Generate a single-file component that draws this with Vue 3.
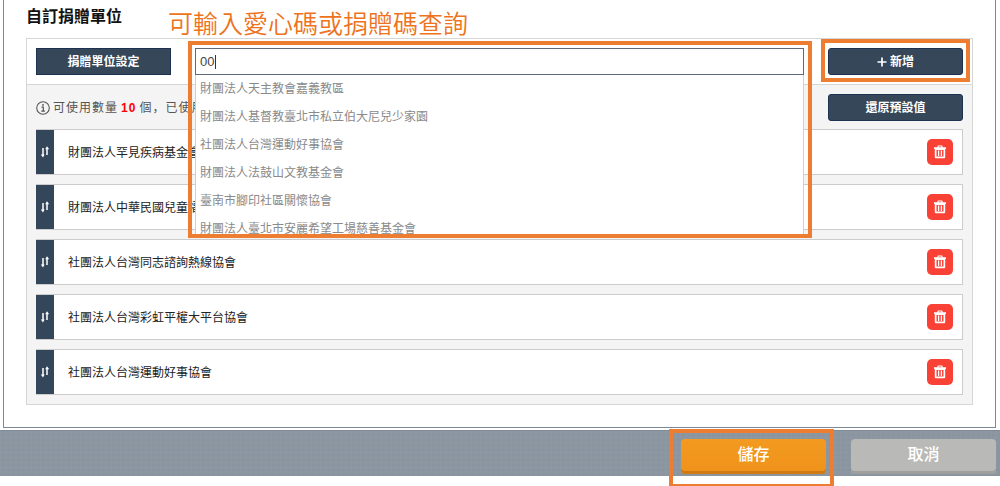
<script setup>
import { ref } from 'vue'

const keyword = ref('00')

const suggestions = [
  '財團法人天主教會嘉義教區',
  '財團法人基督教臺北市私立伯大尼兒少家園',
  '社團法人台灣運動好事協會',
  '財團法人法鼓山文教基金會',
  '臺南市腳印社區關懷協會',
  '財團法人臺北市安麗希望工場慈善基金會',
]

const units = ref([
  '財團法人罕見疾病基金會',
  '財團法人中華民國兒童福',
  '社團法人台灣同志諮詢熱線協會',
  '社團法人台灣彩虹平權大平台協會',
  '社團法人台灣運動好事協會',
])

function removeUnit(index) {
  units.value.splice(index, 1)
}
</script>

<template>
  <div class="page">
    <main class="frame">
      <div class="heading">
        <h1>自訂捐贈單位</h1>
        <p class="note">可輸入愛心碼或捐贈碼查詢</p>
      </div>

      <section class="panel">
        <div class="panel-head">
          <label class="tag" for="unit-search">捐贈單位設定</label>
          <div class="combo">
            <input id="unit-search" v-model="keyword" type="text" autocomplete="off" />
            <span class="caret"></span>
            <ul class="menu">
              <li v-for="name in suggestions" :key="name">{{ name }}</li>
            </ul>
            <span class="mark mark-search"></span>
          </div>
          <div class="marked">
            <button class="btn" type="button">
              <svg width="10" height="10" viewBox="0 0 10 10" aria-hidden="true">
                <path d="M5 0.5v9M0.5 5h9" stroke="#fff" stroke-width="1.7" />
              </svg>
              新增
            </button>
            <span class="mark mark-add"></span>
          </div>
        </div>

        <div class="panel-body">
          <div class="info">
            <p>
              <svg width="14" height="14" viewBox="0 0 14 14" aria-hidden="true">
                <circle cx="7" cy="7" r="6.3" fill="none" stroke="#555" stroke-width="1.1" />
                <circle cx="7" cy="3.9" r="0.9" fill="#555" />
                <path d="M5.5 6.2H7.3V10M5.3 10.2H8.9" fill="none" stroke="#555" stroke-width="1.2" />
              </svg>
              <span>可使用數量<b>10</b>個，已使用</span>
            </p>
            <button class="btn" type="button">還原預設值</button>
          </div>

          <ul class="units">
            <li v-for="(name, i) in units" :key="name">
              <button class="handle" type="button" aria-label="排序">
                <svg width="10" height="12" viewBox="0 0 10 12" aria-hidden="true">
                  <path d="M3 2V9.5M7 9V2.5" fill="none" stroke="#fff" stroke-width="1.5" />
                  <path d="M0.8 8.5H4.6L3 11.6ZM5.2 3.2H9.2L7 0.2Z" fill="#fff" />
                </svg>
              </button>
              <span class="name">{{ name }}</span>
              <button class="remove" type="button" aria-label="刪除" @click="removeUnit(i)">
                <svg width="14" height="14" viewBox="0 0 14 14" aria-hidden="true">
                  <path
                    fill="#fff"
                    fill-rule="evenodd"
                    d="M4.8 0.5H9.2L9.8 2.2H13V4H12.2V12.3Q12.2 13.3 11.2 13.3H2.8Q1.8 13.3 1.8 12.3V4H1V2.2H4.2ZM3.5 5V11.6H10.5V5ZM5.7 1.6L5.5 2.2H8.5L8.3 1.6Z"
                  />
                  <path d="M5.6 5.6V11M8.4 5.6V11" stroke="#fff" stroke-width="1.3" />
                </svg>
              </button>
            </li>
          </ul>
        </div>
      </section>
    </main>

    <footer class="bar">
      <div class="marked">
        <button class="action save" type="button">儲存</button>
        <span class="mark mark-save"></span>
      </div>
      <button class="action cancel" type="button">取消</button>
    </footer>
  </div>
</template>

<style>
body {
  background: #fff;
}
</style>

<style scoped>
.page,
.page button,
.page input {
  font-family: "Liberation Sans", "Noto Sans CJK TC", sans-serif;
}
.page * {
  box-sizing: border-box;
}
.page {
  padding-bottom: 10px;
  overflow: hidden;
}
h1,
p,
ul {
  margin: 0;
  padding: 0;
  list-style: none;
}
.frame {
  margin: 0 4px 2px 3px;
  padding: 0 22px 22px;
  border: 1px solid #7d8795;
  border-top: 0;
}
.heading {
  display: flex;
  align-items: flex-start;
  gap: 46px;
  height: 38px;
}
h1 {
  font-size: 16px;
  line-height: 33px;
  font-weight: 700;
  color: #111;
}
.note {
  padding-top: 5px;
  font-size: 25px;
  line-height: 38px;
  font-weight: 350;
  color: #ed7320;
}
.panel {
  border: 1px solid #d6d6d6;
}
.panel-head {
  display: flex;
  align-items: center;
  gap: 24px;
  padding: 9px;
  border-bottom: 1px solid #d6d6d6;
  background: #fff;
}
.tag,
.btn {
  display: flex;
  align-items: center;
  justify-content: center;
  gap: 3px;
  width: 135px;
  height: 27px;
  padding: 0;
  border: 1px solid #1d3150;
  background: #364759;
  color: #fff;
  font-size: 12px;
  line-height: 16px;
  font-weight: 700;
}
.btn {
  border-radius: 3px;
}
.combo {
  position: relative;
  flex: 1;
}
.combo input {
  display: block;
  width: 100%;
  height: 27px;
  padding: 0 4px;
  border: 1px solid #5f6b79;
  border-radius: 0;
  outline: 0;
  background: #fff;
  font-size: 13px;
  color: #444;
}
.caret {
  position: absolute;
  top: 7px;
  left: 20px;
  width: 1px;
  height: 14px;
  background: #333;
}
.menu {
  position: absolute;
  z-index: 2;
  top: 100%;
  left: 0;
  right: 0;
  height: 160px;
  overflow: hidden;
  border: 1px solid #d0d0d0;
  border-top: 0;
  background: #fff;
}
.menu li {
  padding: 0 4px;
  font-size: 12px;
  line-height: 28px;
  color: #8a8a8a;
}
.marked {
  position: relative;
}
.mark {
  position: absolute;
  z-index: 3;
  border: 4px solid #ed7d31;
  pointer-events: none;
}
.mark-search {
  top: -7px;
  left: -7px;
  right: -8px;
  height: 197px;
}
.mark-add {
  inset: -9px -7px -7px;
}
.mark-save {
  inset: -10px -8px -12px -12px;
}
.panel-body {
  padding: 9px;
  background: #f4f4f4;
}
.info {
  display: flex;
  align-items: center;
  justify-content: space-between;
  margin-bottom: 8px;
}
.info p {
  display: flex;
  align-items: center;
  gap: 3px;
  font-family: "Liberation Sans", "Noto Sans CJK SC", sans-serif;
  font-size: 12px;
  line-height: 16px;
  letter-spacing: 1px;
  color: #555;
}
.info b {
  margin: 0 3px;
  color: #f00;
}
.units {
  display: flex;
  flex-direction: column;
  gap: 9px;
}
.units li {
  display: flex;
  align-items: center;
  height: 46px;
  padding-right: 9px;
  border: 1px solid #ccc;
  border-left: 0;
  background: #fff;
}
.handle {
  display: flex;
  align-items: center;
  justify-content: center;
  align-self: stretch;
  width: 18px;
  padding: 0;
  border: 0;
  background: #34475a;
}
.name {
  flex: 1;
  padding-top: 2px;
  padding-left: 14px;
  font-size: 12px;
  line-height: 18px;
  color: #222;
}
.remove {
  display: flex;
  align-items: center;
  justify-content: center;
  width: 26px;
  height: 26px;
  padding: 0;
  border: 0;
  border-radius: 5px;
  background: #f94135;
}
.bar {
  display: flex;
  justify-content: flex-end;
  gap: 25px;
  height: 46px;
  padding: 8px 4px 0;
  border-top: 1px solid #808b98;
  background:
    repeating-linear-gradient(90deg, rgba(255, 255, 255, 0.02) 0 2px, transparent 2px 5px),
    repeating-linear-gradient(0deg, rgba(40, 60, 80, 0.02) 0 2px, transparent 2px 5px),
    #8b96a1;
}
.action {
  display: block;
  width: 145px;
  height: 35px;
  padding: 0 0 3px;
  border: 0;
  border-radius: 4px;
  color: #fff;
  font-size: 16px;
  line-height: 32px;
  font-weight: 500;
}
.save {
  background: linear-gradient(#f39a20, #ef921b);
  box-shadow: inset 0 -3px #cf7a12;
}
.cancel {
  background: #b9b9b7;
  box-shadow: inset 0 -3px #9f9f9d;
}
</style>
